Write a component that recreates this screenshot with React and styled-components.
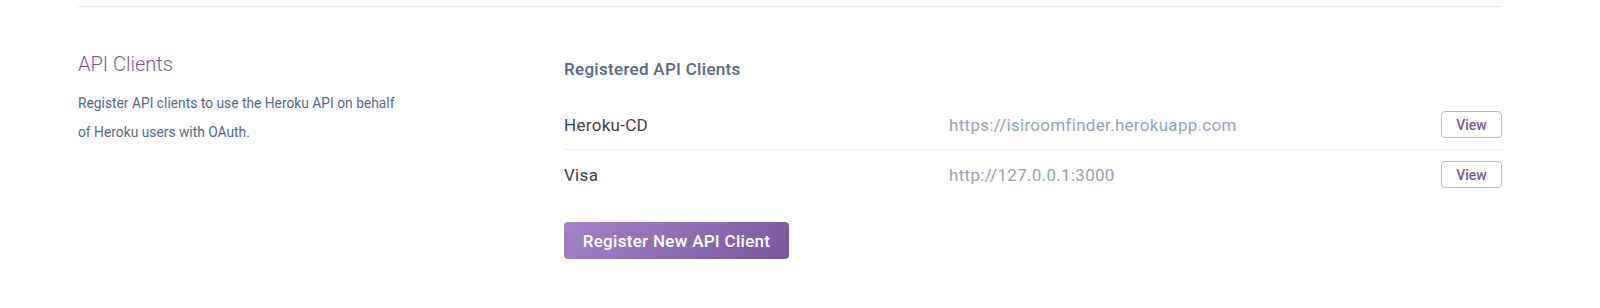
import React from 'react';
import styled, { createGlobalStyle } from 'styled-components';

const GlobalStyle = createGlobalStyle`
  body {
    margin: 0;
    background: #fff;
    font-family: Roboto, "Liberation Sans", sans-serif;
    -webkit-font-smoothing: antialiased;
  }
`;

const clients = [
  { name: 'Heroku-CD', url: 'https://isiroomfinder.herokuapp.com' },
  { name: 'Visa', url: 'http://127.0.0.1:3000' },
];

const App = () => {
  return (
    <>
      <GlobalStyle />
      <Page>
        <Section>
          <Aside>
            <Title>API Clients</Title>
            <Description>
              Register API clients to use the Heroku API on behalf of Heroku users with OAuth.
            </Description>
          </Aside>
          <Main>
            <Heading>Registered API Clients</Heading>
            <List>
              {clients.map((c) => (
                <Row key={c.name}>
                  <Name>{c.name}</Name>
                  <Url>{c.url}</Url>
                  <ViewButton>View</ViewButton>
                </Row>
              ))}
            </List>
            <PrimaryButton>Register New API Client</PrimaryButton>
          </Main>
        </Section>
      </Page>
    </>
  );
};

const Page = styled.div`
  padding: 6px 98px 0 78px;
  height: 308px;
  box-sizing: border-box;
`;

const Section = styled.section`
  display: flex;
  border-top: 1px solid #e7eaf0;
  padding-top: 45px;
`;

const Aside = styled.div`
  width: 486px;
  flex-shrink: 0;
`;

const Title = styled.h2`
  margin: 0 0 12px;
  font-size: 20px;
  font-weight: 300;
  line-height: 25px;
  color: #79589f;
`;

const Description = styled.p`
  margin: 0;
  width: 330px;
  font-size: 13.8px;
  line-height: 28.5px;
  color: #596981;
`;

const Main = styled.div`
  flex: 1;
  display: flex;
  flex-direction: column;
  align-items: flex-start;
`;

const Heading = styled.h3`
  margin: 6px 0 20px;
  font-size: 17px;
  font-weight: 500;
  letter-spacing: 0.3px;
  line-height: 22px;
  color: #596981;
`;

const List = styled.div`
  width: 100%;
`;

const Row = styled.div`
  display: flex;
  align-items: center;
  height: 49px;
  & + & {
    border-top: 1px solid #eceef4;
  }
`;

const Name = styled.div`
  width: 385px;
  font-size: 17px;
  letter-spacing: 0.3px;
  color: #3f3f44;
`;

const Url = styled.div`
  flex: 1;
  font-size: 17px;
  letter-spacing: 0.3px;
  color: #96a3b6;
`;

const ViewButton = styled.button`
  width: 61px;
  height: 27px;
  border: 1px solid #c5b3dd;
  border-radius: 4px;
  background: #fff;
  font-family: inherit;
  font-size: 14px;
  font-weight: 500;
  color: #79589f;
  cursor: pointer;
`;

const PrimaryButton = styled.button`
  margin-top: 23px;
  width: 225px;
  height: 37px;
  border: none;
  border-radius: 4px;
  background: linear-gradient(135deg, #a283c9 0%, #79589f 100%);
  font-family: inherit;
  font-size: 17px;
  font-weight: 500;
  letter-spacing: 0.3px;
  color: #fff;
  cursor: pointer;
`;

export default App;
